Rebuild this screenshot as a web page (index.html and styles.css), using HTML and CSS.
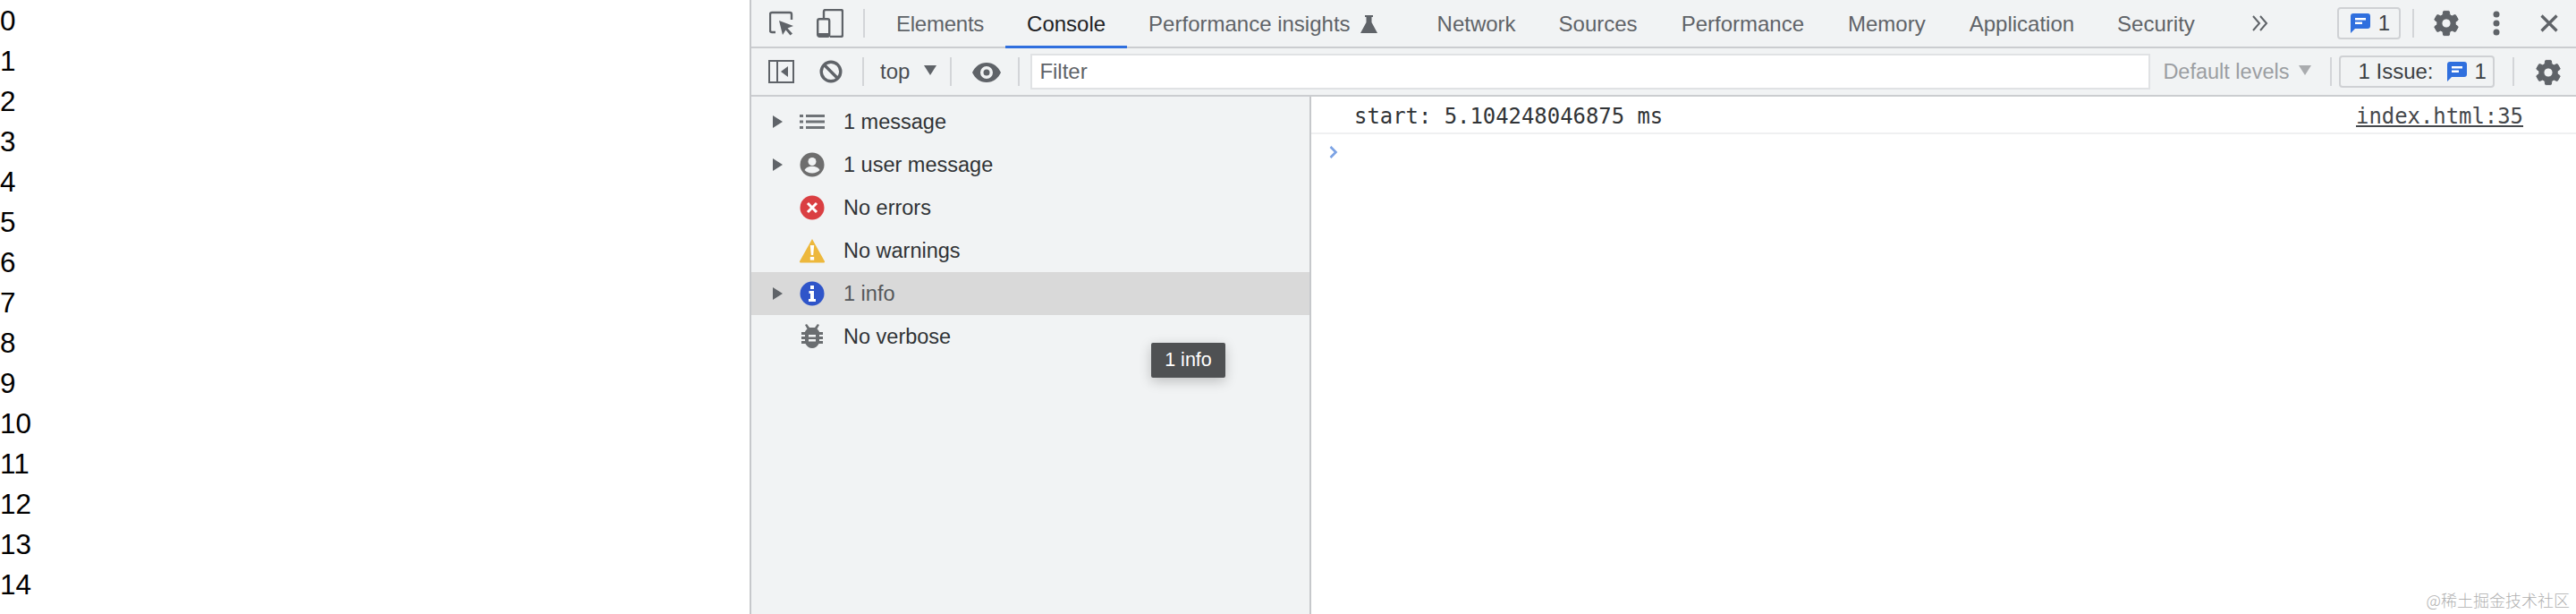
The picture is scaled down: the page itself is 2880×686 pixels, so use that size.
FILE: index.html
```html
<!DOCTYPE html>
<html lang="en">
<head>
<meta charset="utf-8">
<title>DevTools console</title>
<link rel="stylesheet" href="styles.css">
</head>
<body>
<svg class="defs" width="0" height="0" aria-hidden="true">
  <defs>
    <symbol id="gear" viewBox="0 0 24 24"><path d="M19.14 12.94c.04-.3.06-.61.06-.94 0-.32-.02-.64-.07-.94l2.03-1.58c.18-.14.23-.41.12-.61l-1.92-3.32c-.12-.22-.37-.29-.59-.22l-2.39.96c-.5-.38-1.03-.7-1.62-.94l-.36-2.54c-.04-.24-.24-.41-.48-.41h-3.84c-.24 0-.43.17-.47.41l-.36 2.54c-.59.24-1.13.57-1.62.94l-2.39-.96c-.22-.08-.47 0-.59.22L2.74 8.87c-.12.21-.08.47.12.61l2.03 1.58c-.05.3-.09.63-.09.94s.02.64.07.94l-2.03 1.58c-.18.14-.23.41-.12.61l1.92 3.32c.12.22.37.29.59.22l2.39-.96c.5.38 1.03.7 1.62.94l.36 2.54c.05.24.24.41.48.41h3.84c.24 0 .44-.17.47-.41l.36-2.54c.59-.24 1.13-.56 1.62-.94l2.39.96c.22.08.47 0 .59-.22l1.92-3.32c.12-.22.07-.47-.12-.61l-2.01-1.58zM12 15.6c-1.98 0-3.6-1.62-3.6-3.6s1.62-3.6 3.6-3.6 3.6 1.62 3.6 3.6-1.62 3.6-3.6 3.6z" fill="#5f6368" stroke="#5f6368" stroke-width="0.7"/></symbol>
    <symbol id="bubble" viewBox="0 0 22 22"><path d="M3 0h16a3 3 0 0 1 3 3v11a3 3 0 0 1-3 3H5l-5 5V3a3 3 0 0 1 3-3z" fill="#2f6fde"/><path d="M5 5h12v2.400H5zM5 9.600h8V12H5z" fill="#fff"/></symbol>
    <symbol id="tri" viewBox="0 0 12 14"><path d="M0 0l11 7-11 7z" fill="#5f6368"/></symbol>
  </defs>
</svg>
<div class="screen">
  <div class="numbers">
    <div>0</div><div>1</div><div>2</div><div>3</div><div>4</div><div>5</div><div>6</div><div>7</div>
    <div>8</div><div>9</div><div>10</div><div>11</div><div>12</div><div>13</div><div>14</div><div>15</div>
  </div>
  <div class="devtools">
    <div class="tabbar">
      <svg class="i-inspect" width="28" height="28" viewBox="0 0 28 28"><path d="M11 2H3a2 2 0 0 0-2 2v18a2 2 0 0 0 2 2h4" fill="none" stroke="#5f6368" stroke-width="2.400"/><path d="M11 2h12a2 2 0 0 1 2 2v6" fill="none" stroke="#5f6368" stroke-width="2.400"/><path d="M11 11l16 6-6.500 2.500 5.500 6-2.500 2-5-6-3.500 5.500z" fill="#5f6368"/></svg>
      <svg class="i-device" width="30" height="32" viewBox="0 0 30 32"><path d="M8 11V3a2 2 0 0 1 2-2h17a2 2 0 0 1 2 2v26a2 2 0 0 1-2 2H15" fill="none" stroke="#5f6368" stroke-width="2.400"/><rect x="1.200" y="11.200" width="13" height="19.600" rx="2" fill="none" stroke="#5f6368" stroke-width="2.400"/><rect x="1" y="27" width="14" height="4" fill="#5f6368"/></svg>
      <span class="divider d-tabs"></span>
      <div class="tab tab-first">Elements</div>
      <div class="tab active">Console</div>
      <div class="tab tab-flask">Performance insights
        <svg class="i-flask" width="19" height="20" viewBox="0 0 19 20"><path d="M5 0h9v2h-1.500v6L19 20H0L6.500 8V2H5z" fill="#5f6368"/></svg>
      </div>
      <div class="tab">Network</div>
      <div class="tab tab-wide">Sources</div>
      <div class="tab tab-wide">Performance</div>
      <div class="tab tab-wide">Memory</div>
      <div class="tab">Application</div>
      <div class="tab">Security</div>
      <svg class="i-more" width="18" height="18" viewBox="0 0 18 18"><path d="M1 1l7 8-7 8M9 1l7 8-7 8" fill="none" stroke="#5f6368" stroke-width="2"/></svg>
      <div class="badge">
        <svg class="i-bubble" width="22" height="22"><use href="#bubble"/></svg>
        <span>1</span>
      </div>
      <span class="divider d-badge"></span>
      <svg class="i-gear-top" width="34" height="34"><use href="#gear"/></svg>
      <svg class="i-dots" width="8" height="28" viewBox="0 0 8 28"><circle cx="4" cy="4" r="3.500" fill="#5f6368"/><circle cx="4" cy="14" r="3.500" fill="#5f6368"/><circle cx="4" cy="24" r="3.500" fill="#5f6368"/></svg>
      <svg class="i-close" width="20" height="20" viewBox="0 0 20 20"><path d="M1.500 1.500l17 17M18.500 1.500l-17 17" stroke="#5f6368" stroke-width="3.200"/></svg>
    </div>
    <div class="filterbar">
      <svg class="i-panel" width="29" height="26" viewBox="0 0 29 26"><rect x="1" y="1" width="27" height="24" fill="none" stroke="#5f6368" stroke-width="2"/><path d="M10 1v24" stroke="#5f6368" stroke-width="2"/><path d="M22 7v12l-8-6z" fill="#5f6368"/></svg>
      <svg class="i-clear" width="26" height="26" viewBox="0 0 26 26"><circle cx="13" cy="13" r="10.800" fill="none" stroke="#5f6368" stroke-width="3.400"/><path d="M5.500 5.500l15 15" stroke="#5f6368" stroke-width="3.400"/></svg>
      <span class="divider d-clear"></span>
      <span class="ctx">top</span>
      <span class="caret"></span>
      <span class="divider d-ctx"></span>
      <svg class="i-eye" width="32" height="22" viewBox="0 0 32 22"><path fill-rule="evenodd" d="M16 0c7.500 0 13 4.500 16 11-3 6.500-8.500 11-16 11S3 17.500 0 11C3 4.500 8.500 0 16 0zm0 4a7 7 0 1 0 0 14 7 7 0 0 0 0-14zm0 3.500a3.500 3.500 0 1 1 0 7 3.500 3.500 0 0 1 0-7z" fill="#5f6368"/></svg>
      <span class="divider d-eye"></span>
      <div class="filter">Filter</div>
      <span class="levels">Default levels</span>
      <span class="caret caret-muted"></span>
      <span class="divider d-levels"></span>
      <div class="issues">
        <span>1 Issue:</span>
        <svg class="i-bubble" width="22" height="22"><use href="#bubble"/></svg>
        <span>1</span>
      </div>
      <span class="divider d-issues"></span>
      <svg class="i-gear-bottom" width="34" height="34"><use href="#gear"/></svg>
    </div>
    <div class="panes">
      <div class="sidebar">
        <div class="row">
          <svg class="tri" width="12" height="14"><use href="#tri"/></svg>
          <svg class="icon" width="28" height="28" viewBox="0 0 28 28"><path d="M0 6h4v3H0zM7 6h21v3H7zM0 12.500h4v3H0zM7 12.500h21v3H7zM0 19h4v3H0zM7 19h21v3H7z" fill="#6f7377"/></svg>
          <span>1 message</span>
        </div>
        <div class="row">
          <svg class="tri" width="12" height="14"><use href="#tri"/></svg>
          <svg class="icon" width="28" height="28" viewBox="0 0 28 28"><circle cx="14" cy="14" r="13.500" fill="#6e6e6e"/><circle cx="14" cy="10.500" r="4.500" fill="#f1f3f4"/><path d="M5.500 20c1.500-3 5-4.200 8.500-4.200s7 1.200 8.500 4.200c-2 2.300-5 3.500-8.500 3.500s-6.500-1.200-8.500-3.500z" fill="#f1f3f4"/></svg>
          <span>1 user message</span>
        </div>
        <div class="row">
          <span class="tri"></span>
          <svg class="icon" width="28" height="28" viewBox="0 0 28 28"><circle cx="14" cy="14" r="13.500" fill="#da3f42"/><path d="M9 9l10 10M19 9L9 19" stroke="#fff" stroke-width="3"/></svg>
          <span>No errors</span>
        </div>
        <div class="row">
          <span class="tri"></span>
          <svg class="icon" width="28" height="28" viewBox="0 0 28 28"><path d="M14 1l14 25a1 1 0 0 1-1 1.500H1A1 1 0 0 1 0 26z" fill="#edb83c"/><path d="M11.800 8h4.400l-1 11h-2.400z" fill="#fff"/><rect x="11.800" y="21" width="4.400" height="3.600" fill="#fff"/></svg>
          <span>No warnings</span>
        </div>
        <div class="row selected">
          <svg class="tri" width="12" height="14"><use href="#tri"/></svg>
          <svg class="icon" width="28" height="28" viewBox="0 0 28 28"><circle cx="14" cy="14" r="13.500" fill="#2f55c9"/><rect x="12" y="5" width="4" height="4" fill="#fff"/><path d="M10.500 11H16v9h2v3h-8v-3h2v-6h-1.500z" fill="#fff"/></svg>
          <span>1 info</span>
        </div>
        <div class="row">
          <span class="tri"></span>
          <svg class="icon" width="28" height="28" viewBox="0 0 28 28"><path d="M6 1l2-1 3 4h6l3-4 2 1-2.500 4.500C21 7 22 8 22 9h4v3h-4v2h4v3h-4v2h4v3h-4.500c-1.500 3-4.500 5-7.500 5s-6-2-7.500-5H2v-3h4v-2H2v-3h4v-2H2V9h4c0-1 1-2 2.500-3.500z" fill="#6a6d70"/><path d="M10 12h8v2.500h-8zM10 17h8v2.500h-8z" fill="#f1f3f4"/></svg>
          <span>No verbose</span>
        </div>
      </div>
      <div class="console">
        <div class="message">
          <span>start: 5.104248046875 ms</span>
          <span class="source">index.html:35</span>
        </div>
        <svg class="prompt" width="10" height="14" viewBox="0 0 10 14"><path d="M1.500 1l6 6-6 6" fill="none" stroke="#7ba2e4" stroke-width="2.600"/></svg>
      </div>
    </div>
  </div>
</div>
<div class="tooltip">1 info</div>
<div class="watermark">@稀土掘金技术社区</div>
</body>
</html>
```

FILE: styles.css
```css
html, body {
  margin: 0;
  height: 686px;
  overflow: hidden;
  background: #fff;
}
body {
  font-family: "Liberation Sans", Arial, sans-serif;
  color: #303336;
}
.defs { position: absolute; }
.screen {
  display: flex;
  height: 686px;
  overflow: hidden;
}
.numbers {
  width: 838px;
  flex: none;
  padding-top: 1px;
  font-size: 31.5px;
  line-height: 45px;
  color: #000;
}
.devtools {
  flex: 1;
  min-width: 0;
  display: flex;
  flex-direction: column;
  border-left: 2px solid #c6c8cb;
}
.tabbar, .filterbar {
  display: flex;
  align-items: center;
  flex: none;
  background: #f1f3f4;
  box-sizing: border-box;
  height: 54px;
  box-shadow: inset 0 -2px 0 #cbcdd0;
  font-size: 24px;
  color: #5f6368;
}
.tabbar svg, .filterbar svg { flex: none; }
.divider {
  flex: none;
  width: 2px;
  height: 32px;
  background: #d3d5d8;
}
.tab {
  align-self: stretch;
  display: flex;
  align-items: center;
  box-sizing: border-box;
  padding: 3px 24px 0;
  border-bottom: 3px solid transparent;
  white-space: nowrap;
}
.tab-first { letter-spacing: -0.25px; }
.tab-wide { padding-right: 25px; }
.tab.active {
  color: #202124;
  border-bottom-color: #2f6fde;
}
.tab-flask { padding-right: 43px; }
.i-flask { margin-left: 11px; }
.i-inspect { margin-left: 20px; margin-bottom: 2px; }
.i-device { margin-left: 25px; margin-bottom: 2px; }
.d-tabs { margin: 0 11px 2px 22px; }
.i-more { margin-left: 40px; margin-bottom: 3px; }
.badge, .issues {
  display: flex;
  align-items: center;
  box-sizing: border-box;
  height: 36px;
  border: 2px solid #cfd1d4;
  border-radius: 4px;
  color: #3c4043;
}
.badge {
  width: 71px;
  margin: 0 0 2px 77px;
  padding-left: 13px;
  gap: 9px;
}
.d-badge { margin: 0 19px 2px 13px; }
.i-gear-top { margin-bottom: 2px; }
.i-dots { margin-left: 35px; margin-bottom: 2px; }
.i-close { margin-left: 45px; margin-bottom: 2px; }
.i-panel { margin-left: 19px; margin-bottom: 2px; }
.i-clear { margin-left: 28px; margin-bottom: 2px; }
.d-clear { margin: 0 18px 2px 22px; }
.ctx { color: #4a4e52; margin-bottom: 2px; }
.caret {
  width: 0;
  height: 0;
  margin: 0 0 6px 16px;
  border-left: 7px solid transparent;
  border-right: 7px solid transparent;
  border-top: 11px solid #5f6368;
}
.caret-muted { margin-left: 11px; border-top-color: #a9abae; }
.d-ctx { margin: 0 23px 2px 15px; }
.d-eye { margin: 0 12px 2px 19px; }
.filter {
  flex: none;
  width: 1252px;
  box-sizing: border-box;
  height: 40px;
  margin-bottom: 2px;
  padding-left: 8px;
  line-height: 36px;
  background: #fff;
  border: 2px solid #e0e2e4;
  color: #5f6368;
}
.levels { margin-left: 14px; color: #9b9ea2; margin-bottom: 2px; font-size: 23.5px; }
.d-levels { margin: 0 8px 2px 21px; }
.issues {
  width: 174px;
  margin-bottom: 2px;
  padding-left: 19px;
  white-space: nowrap;
}
.issues .i-bubble { margin: 0 9px 0 15px; }
.d-issues { margin: 0 21px 2px 20px; }
.panes {
  flex: 1;
  display: flex;
  min-height: 0;
}
.sidebar {
  flex: none;
  box-sizing: content-box;
  width: 624px;
  background: #f1f3f4;
  border-right: 2px solid #c6c8cb;
  padding-top: 4px;
}
.row {
  display: flex;
  align-items: center;
  height: 48px;
  padding-left: 24px;
  font-size: 23.5px;
  color: #303336;
  white-space: nowrap;
}
.row.selected {
  background: #d9d9d9;
  color: #55585b;
}
.tri {
  flex: none;
  width: 12px;
  height: 14px;
  margin-right: 18px;
}
.icon {
  flex: none;
  margin-right: 21px;
}
.console {
  flex: 1;
  min-width: 0;
  background: #fff;
  font-family: "DejaVu Sans Mono", "Liberation Mono", monospace;
  font-size: 23.9px;
  color: #303336;
}
.message {
  display: flex;
  justify-content: space-between;
  box-sizing: border-box;
  height: 42px;
  padding: 7px 59px 0 48px;
  border-bottom: 2px solid #eff0f1;
  line-height: 30px;
}
.source {
  color: #45484c;
  text-decoration: underline;
}
.prompt {
  display: block;
  margin: 13px 0 0 20px;
}
.tooltip {
  position: absolute;
  left: 1287px;
  top: 383px;
  width: 83px;
  height: 39px;
  line-height: 38px;
  text-align: center;
  background: #4f5153;
  color: #fff;
  font-size: 21.5px;
  border-radius: 2px;
  box-shadow: 0 4px 14px rgba(0, 0, 0, 0.22);
}
.watermark {
  position: absolute;
  right: 7px;
  top: 658px;
  font-family: "Noto Sans CJK SC", "Liberation Sans", sans-serif;
  font-size: 18px;
  line-height: 24px;
  color: #b0b0b0;
  font-weight: 300;
  white-space: nowrap;
}
```
